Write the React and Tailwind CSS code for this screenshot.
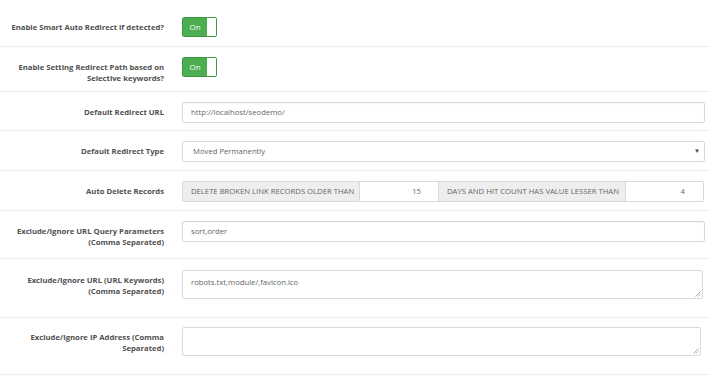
import React from "react";

const font = { fontFamily: '"Open Sans", "Noto Sans", sans-serif' };

function Row({ h, pt, label, children }) {
  return (
    <div className={`flex items-start border-b border-[#ececec] ${h} ${pt}`}>
      <div className="w-[164px] shrink-0 text-right text-[7.7px] leading-[11px] font-bold text-[#505050] pt-[5px] whitespace-nowrap">
        {label}
      </div>
      <div className="ml-[18px] flex-1 pr-[5px]">{children}</div>
    </div>
  );
}

function Toggle() {
  return (
    <div className="flex h-[20px] w-[35px] rounded-[2px] overflow-hidden border border-[#3e9a42]">
      <div className="w-[24px] bg-[#4cae50] text-white text-[8px] flex items-center justify-center">On</div>
      <div className="flex-1 bg-white"></div>
    </div>
  );
}

function Input({ value }) {
  return (
    <div className="h-[21px] border border-[#d9d9d9] rounded-[2px] bg-white flex items-center px-[8px] text-[7.7px] text-[#666] shadow-[inset_0_1px_1px_rgba(0,0,0,0.04)]">
      {value}
    </div>
  );
}

function TextArea({ value, w }) {
  return (
    <div className={`relative h-[29px] border border-[#d9d9d9] rounded-[2px] bg-white px-[8px] pt-[6px] text-[7.7px] leading-[11px] text-[#666] ${w}`}>
      {value}
      <svg className="absolute right-[1px] bottom-[1px]" width="6" height="6" viewBox="0 0 6 6">
        <line x1="0.5" y1="5.5" x2="5.5" y2="0.5" stroke="#999" strokeWidth="0.8" />
        <line x1="3" y1="5.5" x2="5.5" y2="3" stroke="#999" strokeWidth="0.8" />
      </svg>
    </div>
  );
}

export default function App() {
  return (
    <div className="w-[710px] h-[380px] bg-white overflow-hidden" style={font}>
      <Row h="h-[47px]" pt="pt-[17px]" label="Enable Smart Auto Redirect if detected?">
        <Toggle />
      </Row>
      <Row h="h-[45px]" pt="pt-[10px]" label={<>Enable Setting Redirect Path based on<br />Selective keywords?</>}>
        <Toggle />
      </Row>
      <Row h="h-[39px]" pt="pt-[10px]" label="Default Redirect URL">
        <Input value="http://localhost/seodemo/" />
      </Row>
      <Row h="h-[40px]" pt="pt-[10px]" label="Default Redirect Type">
        <div className="h-[21px] border border-[#d9d9d9] rounded-[2px] bg-white flex items-center justify-between pl-[10px] pr-[4px] text-[7.7px] text-[#666]">
          <span>Moved Permanently</span>
          <span className="text-[6px] text-[#444]">▼</span>
        </div>
      </Row>
      <Row h="h-[40px]" pt="pt-[10px]" label="Auto Delete Records">
        <div className="flex h-[21px] text-[7.7px] text-[#666] pr-[1px]">
          <div className="w-[178px] bg-[#eeeeee] border border-[#d9d9d9] rounded-l-[2px] flex items-center pl-[8px] whitespace-nowrap overflow-hidden">
            DELETE BROKEN LINK RECORDS OLDER THAN
          </div>
          <div className="w-[78px] bg-white border-y border-[#d9d9d9] flex items-center justify-end pr-[17px]">15</div>
          <div className="w-[188px] bg-[#eeeeee] border border-[#d9d9d9] flex items-center pl-[8px] whitespace-nowrap overflow-hidden">
            DAYS AND HIT COUNT HAS VALUE LESSER THAN
          </div>
          <div className="flex-1 bg-white border-y border-r border-[#d9d9d9] rounded-r-[2px] flex items-center justify-end pr-[18px]">4</div>
        </div>
      </Row>
      <Row h="h-[48px]" pt="pt-[10px]" label={<>Exclude/Ignore URL Query Parameters<br />(Comma Separated)</>}>
        <Input value="sort,order" />
      </Row>
      <Row h="h-[59px]" pt="pt-[11px]" label={<>Exclude/Ignore URL (URL Keywords)<br />(Comma Separated)</>}>
        <TextArea value="robots.txt,module/,favicon.ico" w="mr-[2px]" />
      </Row>
      <Row h="h-[57px]" pt="pt-[9px]" label={<>Exclude/Ignore IP Address (Comma<br />Separated)</>}>
        <TextArea value="" w="mr-[4px]" />
      </Row>
    </div>
  );
}
